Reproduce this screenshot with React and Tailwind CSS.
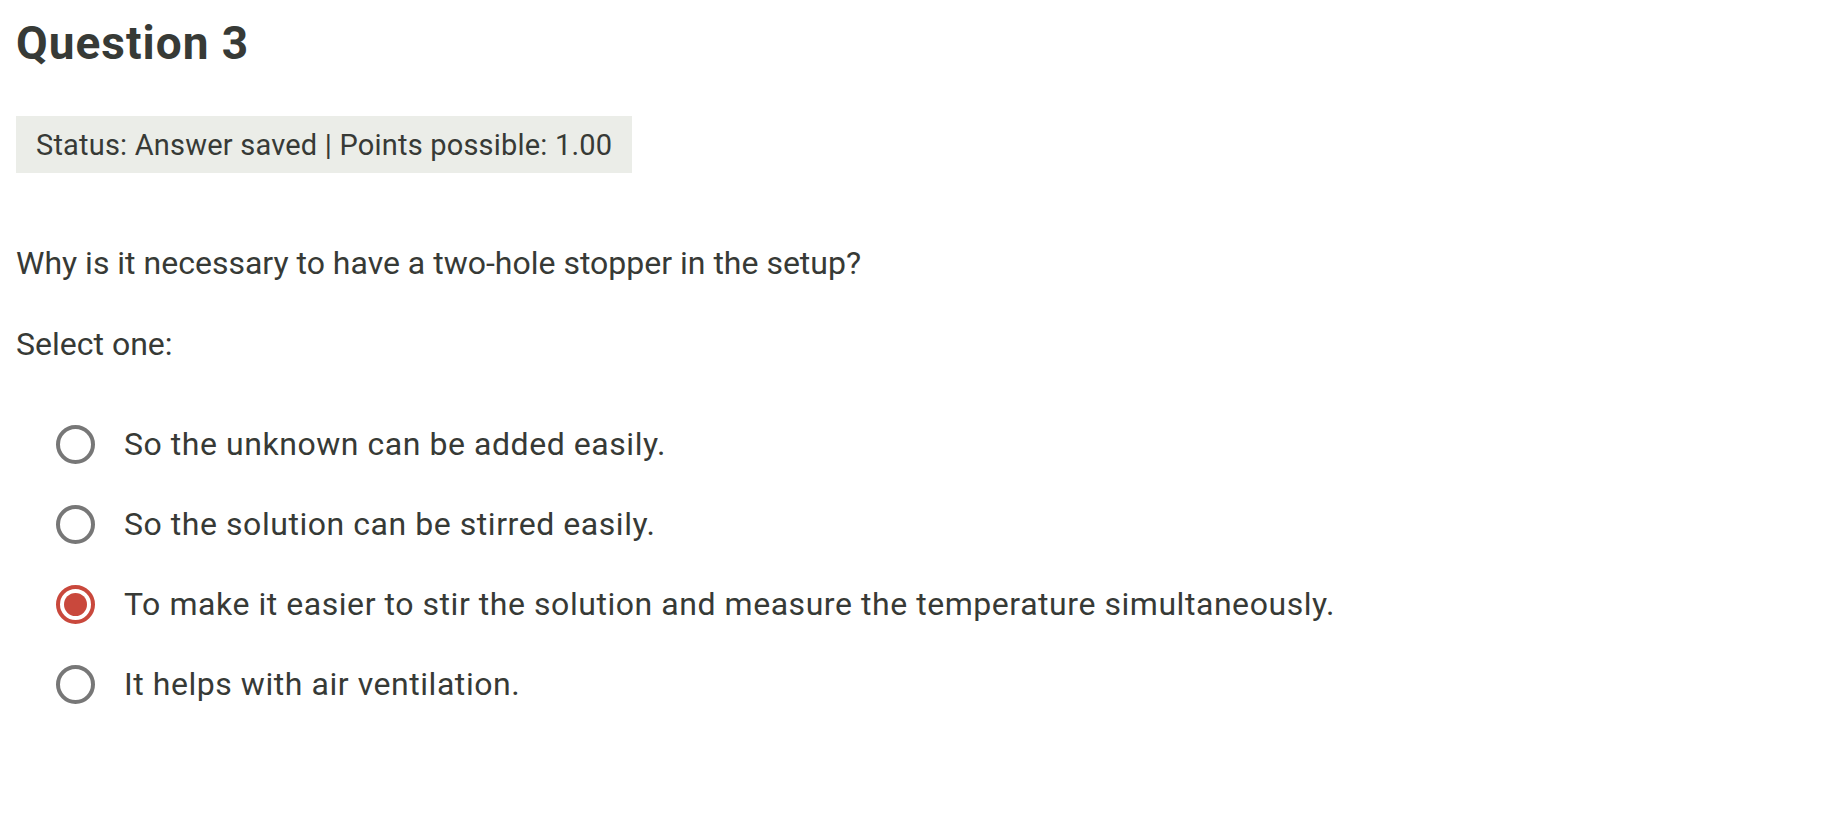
import React from "react";

const options = [
  { text: "So the unknown can be added easily.", checked: false },
  { text: "So the solution can be stirred easily.", checked: false },
  { text: "To make it easier to stir the solution and measure the temperature simultaneously.", checked: true },
  { text: "It helps with air ventilation.", checked: false },
];

function Radio({ checked }) {
  if (checked) {
    return (
      <span className="flex h-[39px] w-[39px] shrink-0 items-center justify-center rounded-full border-[4px] border-[#c9483c]">
        <span className="h-[23px] w-[23px] rounded-full bg-[#c9483c]" />
      </span>
    );
  }
  return <span className="block h-[39px] w-[39px] shrink-0 rounded-full border-[4px] border-[#777777]" />;
}

export default function App() {
  return (
    <div
      className="min-h-[836px] bg-white pl-[16px] pt-[16px] text-[#373a36]"
      style={{ fontFamily: "Roboto, 'Noto Sans', sans-serif" }}
    >
      <h3 className="text-[46px] font-bold leading-[54px] tracking-[1px]">Question 3</h3>
      <div className="mt-[46px] inline-block h-[57px] bg-[#ebede8] px-[20px] pt-[2px] text-[29px] leading-[55px] tracking-[0.2px]">
        Status: Answer saved | Points possible: 1.00
      </div>
      <p className="mt-[66px] text-[32px] leading-[48px]">
        Why is it necessary to have a two-hole stopper in the setup?
      </p>
      <p className="mt-[33px] text-[32px] leading-[48px]">Select one:</p>
      <div className="mt-[36px] flex flex-col pl-[40px]">
        {options.map((o, i) => (
          <label key={i} className="flex h-[80px] items-center gap-[29px]">
            <Radio checked={o.checked} />
            <span className="text-[32px] leading-[48px] tracking-[0.55px]">{o.text}</span>
          </label>
        ))}
      </div>
    </div>
  );
}
